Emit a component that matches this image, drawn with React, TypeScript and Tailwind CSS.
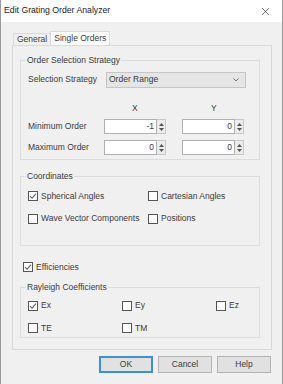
import React from 'react';
import { X } from 'lucide-react';

const font = { fontFamily: '"Liberation Sans", Arial, sans-serif' };

const CheckBox = ({ checked, label }: { checked?: boolean; label: string }) => (
  <label className="flex items-center gap-[3px]">
    <span className="flex h-[10px] w-[10px] items-center justify-center border border-[#555] bg-white">
      {checked && (
        <svg width="8" height="8" viewBox="0 0 8 8">
          <path d="M1 4.2 L3.1 6.2 L7 1.6" fill="none" stroke="#666" strokeWidth="1.1" />
        </svg>
      )}
    </span>
    <span>{label}</span>
  </label>
);

const Spin = ({ value }: { value: string }) => (
  <div className="flex h-[15px] items-stretch">
    <div className="flex w-[53px] items-center justify-end border border-[#b0b0b0] bg-white pr-[2px]">{value}</div>
    <div className="flex w-[9px] flex-col items-center justify-center gap-[2px] border-y border-r border-[#c8c8c8] bg-[#ececec]">
      <svg width="5" height="3" viewBox="0 0 5 3">
        <path d="M0 3 L2.5 0 L5 3 Z" fill="#555" />
      </svg>
      <svg width="5" height="3" viewBox="0 0 5 3">
        <path d="M0 0 L2.5 3 L5 0 Z" fill="#555" />
      </svg>
    </div>
  </div>
);

const Group = ({ title, className, children }: { title: string; className?: string; children: React.ReactNode }) => (
  <fieldset className={`ml-[7px] mr-[11px] border border-[#dcdcdc] px-[7px] ${className ?? ''}`}>
    <legend className="-ml-[2px] px-[1px] leading-none">{title}</legend>
    {children}
  </fieldset>
);

const Button = ({ label, primary }: { label: string; primary?: boolean }) => (
  <button
    type="button"
    className={`flex h-[17px] w-[54px] items-center justify-center bg-[#e1e1e1] ${
      primary ? 'border-2 border-[#3c8fd8]' : 'border border-[#b4b4b4]'
    }`}
  >
    {label}
  </button>
);

export default function App() {
  return (
    <div style={font} className="flex h-[384px] w-[283px] flex-col border-x border-[#9a9a9a] bg-[#f0f0f0] text-[8.5px] text-[#3a3a3a]">
      <div className="flex h-[22px] items-center justify-between bg-white pl-[3px] pr-[10px] text-[8.7px] text-[#222]">
        <span>Edit Grating Order Analyzer</span>
        <X size={13} strokeWidth={1.2} className="text-[#222]" />
      </div>

      <div className="flex items-end pl-[12px] pt-[9px]">
        <div className="flex h-[12px] items-center border border-b-0 border-[#d9d9d9] px-[3px]">General</div>
        <div className="-ml-px flex h-[14px] items-center border border-b-0 border-[#d9d9d9] bg-white px-[3px]">Single Orders</div>
      </div>

      <div className="ml-[11px] flex h-[305px] w-[260px] flex-col border border-[#d9d9d9] bg-[#f0f0f0] pt-[10px]">
        <Group title="Order Selection Strategy" className="h-[104px]">
          <div className="mt-[7px] flex items-center">
            <span className="w-[78px]">Selection Strategy</span>
            <div className="flex h-[16px] w-[140px] items-center justify-between border border-[#c6c6c6] bg-[#e5e5e5] pl-[2px] pr-[6px]">
              <span>Order Range</span>
              <svg width="6" height="4" viewBox="0 0 6 4">
                <path d="M0.5 0.5 L3 3 L5.5 0.5" fill="none" stroke="#666" strokeWidth="0.9" />
              </svg>
            </div>
          </div>
          <div className="mt-[14px] flex">
            <span className="ml-[104px] w-[10px]">X</span>
            <span className="ml-[69px]">Y</span>
          </div>
          <div className="mt-[5px] flex items-center">
            <span className="w-[76px]">Minimum Order</span>
            <Spin value="-1" />
            <div className="ml-[16px]">
              <Spin value="0" />
            </div>
          </div>
          <div className="mt-[6px] flex items-center">
            <span className="w-[76px]">Maximum Order</span>
            <Spin value="0" />
            <div className="ml-[16px]">
              <Spin value="0" />
            </div>
          </div>
        </Group>

        <Group title="Coordinates" className="mt-[12px] h-[74px]">
          <div className="mt-[9px] grid grid-cols-[120px_1fr] gap-y-[10px]">
            <CheckBox checked label="Spherical Angles" />
            <CheckBox label="Cartesian Angles" />
            <CheckBox label="Wave Vector Components" />
            <CheckBox label="Positions" />
          </div>
        </Group>

        <div className="ml-[10px] mt-[15px]">
          <CheckBox checked label="Efficiencies" />
        </div>

        <Group title="Rayleigh Coefficients" className="mt-[9px] h-[55px]">
          <div className="mt-[8px] grid grid-cols-[94px_94px_1fr] gap-y-[10px]">
            <CheckBox checked label="Ex" />
            <CheckBox label="Ey" />
            <CheckBox label="Ez" />
            <CheckBox label="TE" />
            <CheckBox label="TM" />
          </div>
        </Group>
      </div>

      <div className="mt-[6px] flex justify-end gap-[5px] pr-[11px]">
        <Button label="OK" primary />
        <Button label="Cancel" />
        <Button label="Help" />
      </div>
    </div>
  );
}
